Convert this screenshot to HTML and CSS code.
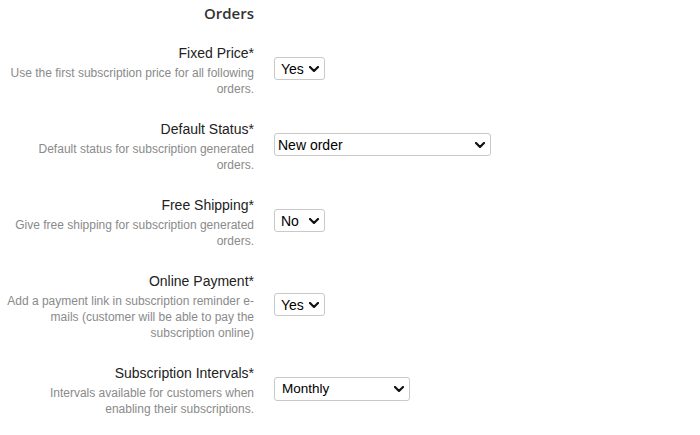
FILE: index.html
```html
<!DOCTYPE html>
<html>
<head>
<meta charset="utf-8">
<link rel="stylesheet" href="styles.css">
</head>
<body>
<div class="form">
  <div class="title-row"><h2 class="title">Orders</h2></div>

  <div class="row">
    <div class="label-col">
      <div class="label">Fixed Price*</div>
      <div class="desc">Use the first subscription price for all following orders.</div>
    </div>
    <div class="field">
      <span class="sel sel-small">
        <select><option>Yes</option><option>No</option></select>
        <svg class="chev" viewBox="0 0 10 6" width="10" height="6"><path d="M1 1l4 4 4-4" fill="none" stroke="#111" stroke-width="2.2" stroke-linecap="round" stroke-linejoin="round"/></svg>
      </span>
    </div>
  </div>

  <div class="row">
    <div class="label-col">
      <div class="label">Default Status*</div>
      <div class="desc">Default status for subscription generated orders.</div>
    </div>
    <div class="field">
      <span class="sel sel-wide">
        <select><option>New order</option></select>
        <svg class="chev" viewBox="0 0 10 6" width="10" height="6"><path d="M1 1l4 4 4-4" fill="none" stroke="#111" stroke-width="2.2" stroke-linecap="round" stroke-linejoin="round"/></svg>
      </span>
    </div>
  </div>

  <div class="row">
    <div class="label-col">
      <div class="label">Free Shipping*</div>
      <div class="desc">Give free shipping for subscription generated orders.</div>
    </div>
    <div class="field">
      <span class="sel sel-small">
        <select><option>No</option><option>Yes</option></select>
        <svg class="chev" viewBox="0 0 10 6" width="10" height="6"><path d="M1 1l4 4 4-4" fill="none" stroke="#111" stroke-width="2.2" stroke-linecap="round" stroke-linejoin="round"/></svg>
      </span>
    </div>
  </div>

  <div class="row">
    <div class="label-col">
      <div class="label">Online Payment*</div>
      <div class="desc">Add a payment link in subscription reminder e-mails (customer will be able to pay the subscription online)</div>
    </div>
    <div class="field">
      <span class="sel sel-small">
        <select><option>Yes</option><option>No</option></select>
        <svg class="chev" viewBox="0 0 10 6" width="10" height="6"><path d="M1 1l4 4 4-4" fill="none" stroke="#111" stroke-width="2.2" stroke-linecap="round" stroke-linejoin="round"/></svg>
      </span>
    </div>
  </div>

  <div class="row">
    <div class="label-col">
      <div class="label">Subscription Intervals*</div>
      <div class="desc">Intervals available for customers when enabling their subscriptions.</div>
    </div>
    <div class="field">
      <span class="sel sel-mid">
        <select><option>Monthly</option></select>
        <svg class="chev" viewBox="0 0 10 6" width="10" height="6"><path d="M1 1l4 4 4-4" fill="none" stroke="#111" stroke-width="2.2" stroke-linecap="round" stroke-linejoin="round"/></svg>
      </span>
    </div>
  </div>
</div>
</body>
</html>
```

FILE: styles.css
```css
html, body {
  margin: 0;
  padding: 0;
  background: #fff;
}
body {
  font-family: "Liberation Sans", Arial, sans-serif;
  color: #333;
}
.form {
  display: flex;
  flex-direction: column;
  gap: 23px;
  padding-top: 4px;
}
.title-row {
  width: 254px;
  display: flex;
  justify-content: flex-end;
  margin-bottom: -1px;
}
.title {
  margin: 0;
  font-family: "Open Sans", "Liberation Sans", sans-serif;
  font-weight: 600;
  font-size: 15px;
  line-height: 18px;
  color: #333;
}
.row {
  display: flex;
  align-items: center;
  gap: 20px;
}
.label-col {
  width: 254px;
  text-align: right;
}
.label {
  font-size: 14px;
  line-height: 18px;
  color: #222;
  margin-bottom: 3px;
}
.desc {
  font-size: 12px;
  line-height: 16px;
  color: #8a8a8a;
  padding-left: 5px;
}
.field {
  display: flex;
  align-items: center;
  margin-bottom: 4px;
}
.sel {
  position: relative;
  display: flex;
}
.sel select {
  -webkit-appearance: none;
  appearance: none;
  box-sizing: border-box;
  display: block;
  height: 23px;
  border: 1px solid #c9c9c9;
  border-radius: 3px;
  background: #fff;
  font-family: "Liberation Sans", Arial, sans-serif;
  font-size: 14px;
  color: #000;
  margin: 0;
  outline: none;
}
.sel-small select {
  width: 51px;
  padding: 0 0 0 6px;
}
.sel-wide select {
  width: 217px;
  padding: 0 0 0 3px;
}
.sel-mid select {
  width: 136px;
  height: 24px;
  padding: 0 0 0 7px;
  font-size: 13.5px;
}
.chev {
  position: absolute;
  right: 6px;
  top: 9px;
  pointer-events: none;
}
```
